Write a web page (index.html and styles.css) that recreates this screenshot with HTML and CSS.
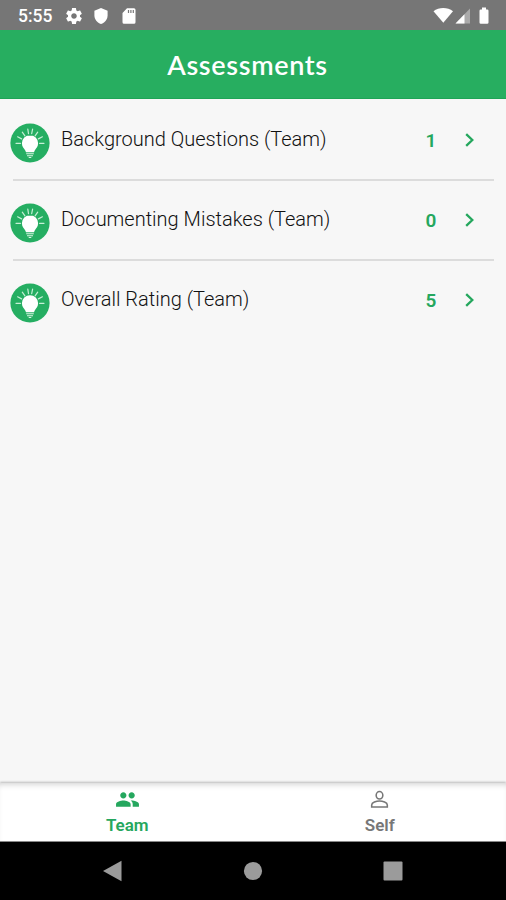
FILE: index.html
```html
<!DOCTYPE html>
<html lang="en">

<head>
    <meta charset="UTF-8">
    <meta name="viewport" content="width=device-width, initial-scale=1.0">
    <title>Assessments</title>
    <link rel="stylesheet" href="styles.css">
</head>

<body>

    <!-- Shared icons -->
    <svg class="hidden">
        <symbol id="bulb" viewBox="0 0 40 40">
            <circle cx="20" cy="20" r="19.6" fill="#25ae62"/>
            <path d="M20 12.2a8.1 8.1 0 0 0-8.1 8.1c0 3.6 2.2 5.3 3.500 7.400.5.9.5 1.600.9 1.600h7.400c.4 0 .4-.7.9-1.600 1.300-2.100 3.500-3.800 3.500-7.400a8.100 8.100 0 0 0-8.100-8.100z" fill="#fff"/>
            <path d="M16.200 30.800h7.600M17 32.800h6M18.700 34.500h2.600" stroke="#d9f5e4" stroke-width="1.100"/>
            <path d="M6 20.300h4.500M29.500 20.300H34M7.600 13.800l4 2.100M32.400 13.800l-4 2.100M12.300 9.200l2.600 3.600M27.700 9.200l-2.600 3.600M17.800 6.200l.7 4.500M22.600 6.200l-.9 4.500" stroke="#c5efd5" stroke-width="1.200" stroke-linecap="round"/>
        </symbol>
        <symbol id="chevron" viewBox="0 0 10 14">
            <path d="M1.200 1.200L7.300 7l-6.100 5.800" fill="none" stroke="#25a75e" stroke-width="2.300"/>
        </symbol>
    </svg>

    <div class="status-bar">
        <span class="time">5:55</span>
        <svg class="status-gear" viewBox="2 2 20 20"><path fill="#fff" d="M19.430 12.980c.04-.32.07-.64.07-.98s-.03-.66-.07-.98l2.110-1.650c.19-.15.24-.42.12-.64l-2-3.460c-.12-.22-.39-.3-.61-.22l-2.490 1c-.52-.4-1.080-.73-1.690-.98l-.38-2.650C14.460 2.180 14.250 2 14 2h-4c-.25 0-.46.18-.49.42l-.38 2.650c-.61.25-1.170.59-1.690.98l-2.490-1c-.23-.09-.49 0-.61.22l-2 3.460c-.13.22-.07.49.12.64l2.110 1.650c-.04.32-.07.65-.07.98s.03.66.07.98l-2.110 1.650c-.19.15-.24.42-.12.64l2 3.460c.12.22.39.3.61.22l2.490-1c.52.4 1.080.73 1.690.98l.38 2.650c.03.24.24.42.49.42h4c.25 0 .46-.18.49-.42l.38-2.650c.61-.25 1.170-.59 1.690-.98l2.490 1c.23.09.49 0 .61-.22l2-3.460c.12-.22.07-.49-.12-.64l-2.110-1.650zM12 15.500c-1.930 0-3.500-1.570-3.500-3.500s1.570-3.500 3.500-3.500 3.500 1.570 3.500 3.500-1.570 3.500-3.500 3.500z"/></svg>
        <svg class="status-shield" viewBox="0 0 14 16"><path fill="#fff" d="M7 0l6.600 2.700v4.600c0 4-2.800 7.500-6.600 8.700-3.800-1.200-6.600-4.700-6.600-8.700V2.700z"/></svg>
        <svg class="status-card" viewBox="0 0 14 16"><path fill="#fff" d="M5 .3h7a1.500 1.500 0 0 1 1.500 1.500v12.400a1.500 1.500 0 0 1-1.500 1.500H2a1.500 1.500 0 0 1-1.500-1.500V5z"/><path d="M6.500 2v3M8.900 2v3M11.300 2v3" stroke="#777" stroke-width="1.200"/></svg>
        <svg class="status-right" viewBox="0 0 58 18">
            <path fill="#fff" d="M.5 4.300C6 0 14.500 0 20 4.300L10.300 15.800z"/>
            <path fill="#aaa" d="M37 1.500V16.500H22.500z"/>
            <path fill="#fff" d="M31.500 7.200v9.300h-9z"/>
            <path fill="#fff" d="M49 .5h4V2.500h1.200a1.300 1.300 0 0 1 1.300 1.300v11.700a1.300 1.300 0 0 1-1.300 1.300h-6.400a1.300 1.300 0 0 1-1.300-1.300V3.800a1.300 1.300 0 0 1 1.300-1.300H49z"/>
        </svg>
    </div>

    <header class="header">
        <h1>Assessments</h1>
    </header>

    <main class="list">
        <div class="item">
            <svg class="item-icon"><use href="#bulb"/></svg>
            <span class="item-name">Background Questions (Team)</span>
            <span class="item-count">1</span>
            <svg class="item-arrow"><use href="#chevron"/></svg>
        </div>
        <div class="item">
            <svg class="item-icon"><use href="#bulb"/></svg>
            <span class="item-name">Documenting Mistakes (Team)</span>
            <span class="item-count">0</span>
            <svg class="item-arrow"><use href="#chevron"/></svg>
        </div>
        <div class="item">
            <svg class="item-icon"><use href="#bulb"/></svg>
            <span class="item-name">Overall Rating (Team)</span>
            <span class="item-count">5</span>
            <svg class="item-arrow"><use href="#chevron"/></svg>
        </div>
    </main>

    <nav class="tabs">
        <div class="tab active">
            <svg viewBox="0 0 24 24"><path fill="currentColor" d="M16 11c1.660 0 2.990-1.340 2.990-3S17.660 5 16 5s-3 1.340-3 3 1.340 3 3 3zm-8 0c1.660 0 2.990-1.340 2.990-3S9.660 5 8 5 5 6.340 5 8s1.340 3 3 3zm0 2c-2.330 0-7 1.170-7 3.500V19h14v-2.500c0-2.330-4.670-3.500-7-3.500zm8 0c-.29 0-.62.02-.97.05 1.160.84 1.970 1.970 1.970 3.450V19h6v-2.500c0-2.330-4.670-3.500-7-3.500z"/></svg>
            <span>Team</span>
        </div>
        <div class="tab">
            <svg viewBox="0 0 24 24"><g fill="none" stroke="currentColor" stroke-width="1.500"><ellipse cx="12" cy="8" rx="3.200" ry="3.600"/><path d="M4.500 19.200v-2c0-2.300 4.500-3.700 7.500-3.700s7.500 1.400 7.500 3.700v2z"/></g></svg>
            <span>Self</span>
        </div>
    </nav>

    <div class="system-nav">
        <svg viewBox="0 0 20 22"><path fill="#9b9b9b" d="M0 11L18.500 .8v20.400z"/></svg>
        <svg viewBox="0 0 20 22"><circle cx="10" cy="11" r="9.100" fill="#9b9b9b"/></svg>
        <svg viewBox="0 0 20 22"><rect x=".5" y="1.500" width="19" height="19" rx="1" fill="#9b9b9b"/></svg>
    </div>

</body>

</html>
```

FILE: styles.css
```css
* {
    box-sizing: border-box;
}

body {
    margin: 0;
    height: 900px;
    display: flex;
    flex-direction: column;
    overflow: hidden;
    background: #f7f7f7;
    font-family: Roboto, sans-serif;
}

svg {
    display: block;
    flex-shrink: 0;
}

.hidden {
    display: none;
}

.status-bar {
    height: 30px;
    display: flex;
    align-items: center;
    padding: 1px 15px 0 18px;
    background: #767676;
    color: #fff;
}

.time {
    width: 48px;
    font-size: 17.5px;
    font-weight: 500;
}

.status-gear {
    width: 16px;
    height: 16px;
}

.status-shield {
    width: 14px;
    height: 16px;
    margin-left: 12px;
}

.status-card {
    width: 14px;
    height: 16px;
    margin-left: 14px;
}

.status-right {
    width: 58px;
    height: 18px;
    margin-left: auto;
}

.header {
    height: 69px;
    display: flex;
    align-items: center;
    justify-content: center;
    padding-right: 11px;
    background: #27ae60;
    border-bottom: 1px solid #1ea456;
}

h1 {
    margin: 0;
    color: #fff;
    font-family: Lato, sans-serif;
    font-size: 27px;
    font-weight: 600;
    letter-spacing: 0.65px;
}

.list {
    flex: 1;
    padding: 0 12px 0 13px;
}

.item {
    height: 80px;
    display: flex;
    align-items: center;
    padding-top: 8px;
}

.item + .item {
    padding-top: 6px;
    border-top: 2px solid #dcdcdc;
}

.item-icon {
    width: 40px;
    height: 40px;
    margin-left: -3px;
}

.item-name {
    flex: 1;
    margin: -9px 0 0 11px;
    color: #111;
    font-size: 20px;
    font-weight: 300;
}

.item-count {
    width: 12px;
    margin: -5px 28px 0 0;
    color: #25a75e;
    font-size: 19px;
    font-weight: 600;
    text-align: center;
}

.item-arrow {
    width: 10px;
    height: 14px;
    margin: -7px 19px 0 0;
}

.tabs {
    height: 59px;
    display: flex;
    padding-left: 1px;
    background: #fff;
    border-bottom: 1px solid #888;
    box-shadow: 0 -1px 2px #bbb, inset 0 5px 6px -4px #ccc;
}

.tab {
    flex: 1;
    display: flex;
    flex-direction: column;
    align-items: center;
    padding-top: 4px;
    color: #777;
    font-size: 17px;
    font-weight: 600;
    line-height: 20px;
}

.tab svg {
    width: 25px;
    height: 25px;
    margin-bottom: 3px;
}

.active {
    color: #25a75e;
}

.system-nav {
    height: 58px;
    display: flex;
    align-items: center;
    justify-content: center;
    gap: 120px;
    background: #000;
}

.system-nav svg {
    width: 20px;
    height: 22px;
}
```
